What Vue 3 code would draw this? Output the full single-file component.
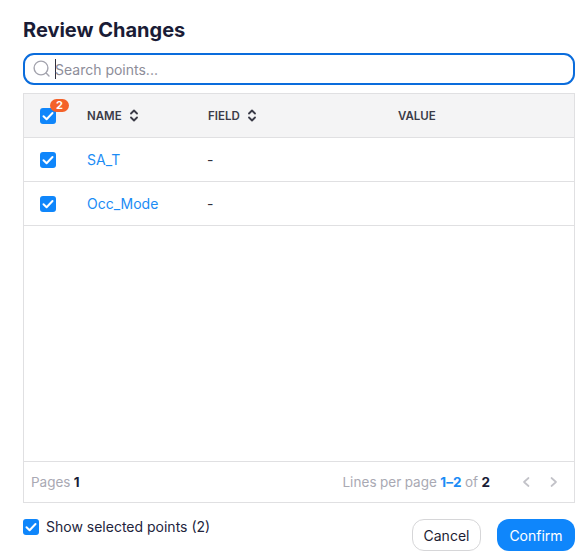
<script setup>
const rows = [
  { name: 'SA_T', field: '-' },
  { name: 'Occ_Mode', field: '-' }
]
</script>

<template>
  <div class="page">
    <h1 class="title">Review Changes</h1>
    <div class="search">
      <svg class="search-icon" width="18" height="18" viewBox="0 0 18 18" fill="none" stroke="#a3a3ad" stroke-width="1.4" stroke-linecap="round">
        <circle cx="8" cy="8" r="6.9" />
        <path d="M13.1 13.1 L16 16" />
      </svg>
      <span class="caret"></span>
      <span class="placeholder">Search points...</span>
    </div>

    <div class="table">
      <div class="row head">
        <div class="cell check-cell">
          <span class="check">
            <svg width="16" height="16" viewBox="0 0 16 16" fill="none"><path d="M3.5 8.2 L6.6 11.2 L12.5 5" stroke="#fff" stroke-width="2" stroke-linecap="round" stroke-linejoin="round" /></svg>
            <span class="badge">2</span>
          </span>
        </div>
        <div class="cell th name-col">NAME
          <svg class="sort" width="8" height="13" viewBox="0 0 8 13" fill="none" stroke="#3a3b47" stroke-width="1.8" stroke-linecap="round" stroke-linejoin="round"><path d="M1 4.5 L4 1.5 L7 4.5" /><path d="M1 8.5 L4 11.5 L7 8.5" /></svg>
        </div>
        <div class="cell th field-col">FIELD
          <svg class="sort" width="8" height="13" viewBox="0 0 8 13" fill="none" stroke="#3a3b47" stroke-width="1.8" stroke-linecap="round" stroke-linejoin="round"><path d="M1 4.5 L4 1.5 L7 4.5" /><path d="M1 8.5 L4 11.5 L7 8.5" /></svg>
        </div>
        <div class="cell th">VALUE</div>
      </div>

      <div v-for="r in rows" :key="r.name" class="row body-row">
        <div class="cell check-cell">
          <span class="check">
            <svg width="16" height="16" viewBox="0 0 16 16" fill="none"><path d="M3.5 8.2 L6.6 11.2 L12.5 5" stroke="#fff" stroke-width="2" stroke-linecap="round" stroke-linejoin="round" /></svg>
          </span>
        </div>
        <div class="cell link name-col">{{ r.name }}</div>
        <div class="cell dash field-col">{{ r.field }}</div>
        <div class="cell"></div>
      </div>

      <div class="spacer"></div>

      <div class="pager">
        <div class="muted">Pages <b class="strong">1</b></div>
        <div class="pager-right">
          <div class="muted lines">Lines per page <b class="blue">1–2</b> of <b class="strong">2</b></div>
          <div class="arrows">
            <svg width="8" height="12" viewBox="0 0 8 12" fill="none" stroke="#c2c2c8" stroke-width="1.7" stroke-linecap="round" stroke-linejoin="round"><path d="M6.5 2 L2 6 L6.5 10" /></svg>
            <svg width="8" height="12" viewBox="0 0 8 12" fill="none" stroke="#c2c2c8" stroke-width="1.7" stroke-linecap="round" stroke-linejoin="round"><path d="M1.5 2 L6 6 L1.5 10" /></svg>
          </div>
        </div>
      </div>
    </div>

    <div class="footer">
      <label class="show">
        <span class="check">
          <svg width="16" height="16" viewBox="0 0 16 16" fill="none"><path d="M3.5 8.2 L6.6 11.2 L12.5 5" stroke="#fff" stroke-width="2" stroke-linecap="round" stroke-linejoin="round" /></svg>
        </span>
        <span class="show-text">Show selected points (2)</span>
      </label>
      <div class="buttons">
        <button class="btn cancel">Cancel</button>
        <button class="btn confirm">Confirm</button>
      </div>
    </div>
  </div>
</template>

<style>
html, body { margin: 0; background: #fff; }
</style>

<style scoped>
.page {
  width: 584px;
  height: 558px;
  box-sizing: border-box;
  padding: 18px 9px 0 23px;
  font-family: Inter, "Open Sans", sans-serif;
  color: #1c1d33;
  overflow: hidden;
}
.title {
  margin: 0;
  font-size: 20px;
  line-height: 24px;
  font-weight: 700;
  color: #1a1c36;
}
.search {
  margin-top: 11px;
  height: 32px;
  box-sizing: border-box;
  border: 2px solid #0a6cdc;
  border-radius: 11px;
  display: flex;
  align-items: center;
  padding-left: 8px;
}
.search-icon { flex: none; }
.caret {
  width: 1px;
  height: 20px;
  background: #30303c;
  margin: 0 -1px 0 4px;
  flex: none;
}
.placeholder {
  font-size: 14px;
  color: #8d8d99;
}
.table {
  margin-top: 8px;
  height: 410px;
  box-sizing: border-box;
  border: 1px solid #e0e0e2;
  display: flex;
  flex-direction: column;
}
.row {
  display: grid;
  grid-template-columns: 63px 121px 190px 1fr;
  align-items: center;
  border-bottom: 1px solid #e0e0e2;
  flex: none;
  height: 44px;
  box-sizing: border-box;
}
.head { background: #f4f4f5; }
.cell { display: flex; align-items: center; }
.check-cell { padding-left: 16px; }
.th {
  font-size: 11.5px;
  font-weight: 600;
  color: #3a3b47;
  gap: 8px;
}
.check {
  position: relative;
  width: 16px;
  height: 16px;
  border-radius: 3px;
  background: #0f86fb;
  display: inline-flex;
  flex: none;
}
.badge {
  position: absolute;
  top: -9px;
  left: 10px;
  width: 19px;
  height: 13px;
  border-radius: 7px;
  background: #f4622a;
  color: #fff;
  font-size: 11px;
  font-weight: 700;
  line-height: 13px;
  text-align: center;
}
.link {
  font-size: 14px;
  color: #1b8cf5;
}
.dash { font-size: 14px; color: #30303c; margin-left: -1px; }
.spacer { flex: 1; }
.pager {
  flex: none;
  height: 41px;
  box-sizing: border-box;
  border-top: 1px solid #e0e0e2;
  display: flex;
  align-items: center;
  justify-content: space-between;
  padding: 0 16px 0 7px;
  font-size: 13.5px;
  word-spacing: -0.5px;
}
.pager-right { display: flex; align-items: center; gap: 32px; }
.lines { letter-spacing: 0.05px; }
.arrows { display: flex; gap: 20px; align-items: center; }
.muted { color: #a9a9b3; }
.strong { color: #1a1c36; font-weight: 700; }
.blue { color: #1b8cf5; font-weight: 700; }
.footer {
  display: flex;
  justify-content: space-between;
  align-items: flex-start;
  margin-top: 16px;
}
.show { display: flex; align-items: center; gap: 7px; height: 16px; }
.show-text { font-size: 14px; color: #23243c; margin-top: -1px; }
.buttons { display: flex; gap: 16px; }
.btn {
  height: 32px;
  box-sizing: border-box;
  border-radius: 12px;
  font-family: inherit;
  font-size: 14px;
  font-weight: 400;
  padding: 0;
}
.cancel {
  width: 69px;
  background: #fff;
  border: 1px solid #d6d6d8;
  color: #1c1d33;
}
.confirm {
  width: 78px;
  background: #0f86fb;
  border: none;
  color: #fff;
}
</style>
